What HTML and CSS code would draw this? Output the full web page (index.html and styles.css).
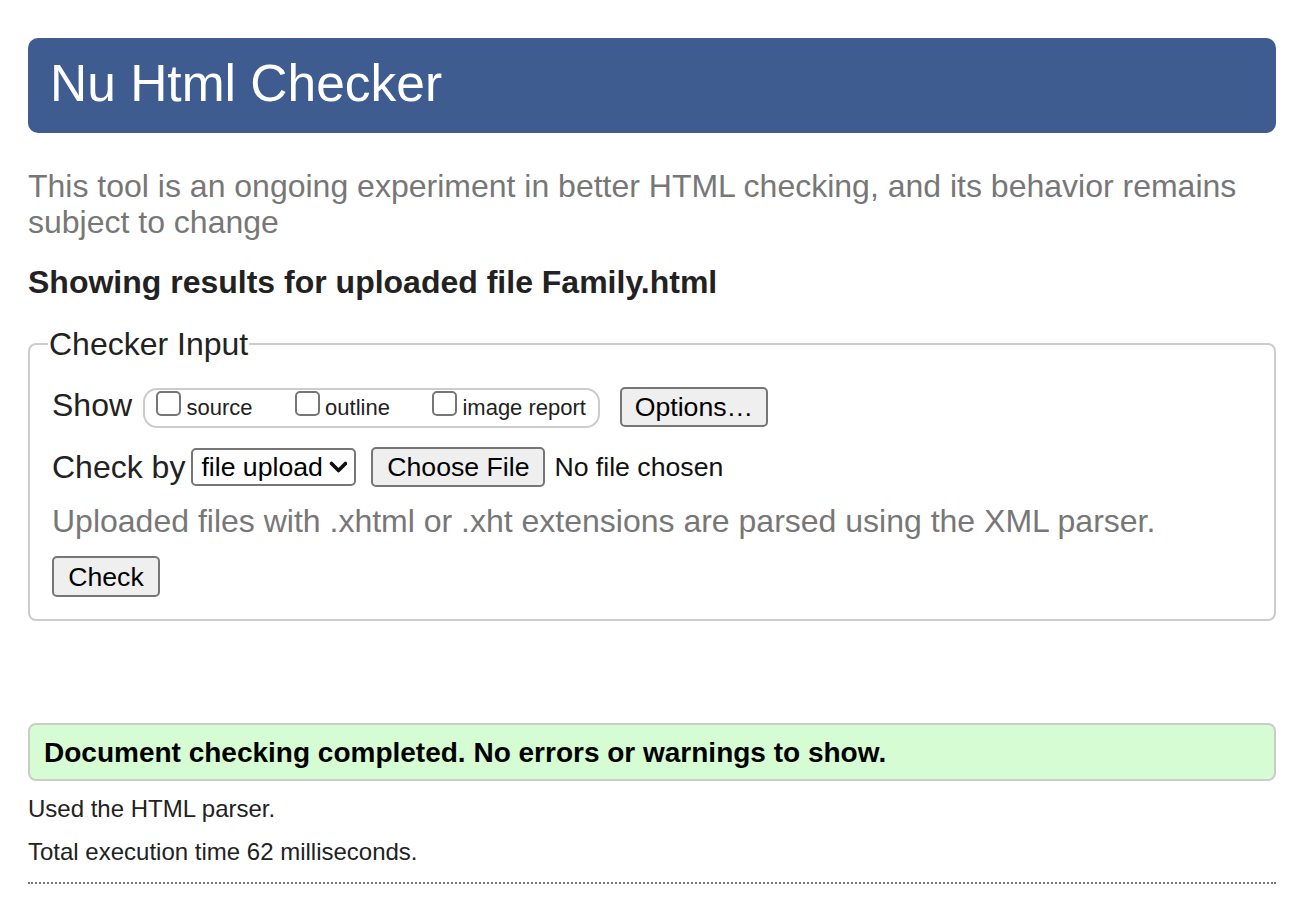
FILE: index.html
```html
<!DOCTYPE html>
<html lang="en">
<head>
<meta charset="utf-8">
<title>Nu Html Checker</title>
<link rel="stylesheet" href="styles.css">
</head>
<body>
<h1 class="banner">Nu Html Checker</h1>
<p class="intro">This tool is an ongoing experiment in better HTML checking, and its behavior remains subject to change</p>
<h2 class="results-title">Showing results for uploaded file Family.html</h2>

<fieldset class="input-box">
  <legend class="input-legend">Checker Input</legend>
  <div class="row row-show">
    <span class="row-label">Show</span>
    <span class="check-group">
      <label class="check-item"><input type="checkbox" class="check"><span class="check-text">source</span></label>
      <label class="check-item"><input type="checkbox" class="check"><span class="check-text">outline</span></label>
      <label class="check-item"><input type="checkbox" class="check"><span class="check-text">image report</span></label>
    </span>
    <button type="button" class="btn btn-options">Options…</button>
  </div>
  <div class="row row-checkby">
    <span class="row-label label-checkby">Check by</span>
    <div class="select">
      <span class="select-text">file upload</span>
      <svg class="chevron" width="20" height="12" viewBox="0 0 20 12"><polyline points="4.5,2.5 11.5,9.5 18.5,2.5" fill="none" stroke="#111" stroke-width="3.6" stroke-linecap="round" stroke-linejoin="round"/></svg>
    </div>
    <button type="button" class="btn btn-file">Choose File</button>
    <span class="file-status">No file chosen</span>
  </div>
  <p class="hint">Uploaded files with .xhtml or .xht extensions are parsed using the XML parser.</p>
  <button type="button" class="btn btn-check">Check</button>
</fieldset>

<div class="success">Document checking completed. No errors or warnings to show.</div>
<p class="meta meta-first">Used the HTML parser.</p>
<p class="meta">Total execution time 62 milliseconds.</p>
<div class="dotted-rule"></div>
</body>
</html>
```
FILE: styles.css
```css
html {
  background: #fff;
}

body {
  margin: 0;
  padding: 38px 22px 20px 28px;
  font-family: "Liberation Sans", Arial, Helvetica, sans-serif;
  font-size: 32px;
  color: #222;
  background: #fff;
}

.banner {
  margin: 0;
  height: 95px;
  box-sizing: border-box;
  padding-left: 22px;
  background: #3e5c8f;
  color: #fff;
  border-radius: 10px;
  font-size: 51.5px;
  font-weight: normal;
  line-height: 91px;
}

.intro {
  margin: 35px 0 0;
  color: #777;
  line-height: 36px;
}

.results-title {
  margin: 24px 0 0;
  font-size: 32px;
  font-weight: bold;
  line-height: 36px;
  color: #222;
}

.input-box {
  margin: 26px 0 0;
  padding: 25px 22px 22px 22px;
  border: 2px solid #ccc;
  border-radius: 8px;
  min-width: 0;
}

.input-legend {
  margin-left: -4px;
  padding: 0 1px;
  line-height: 36px;
  font-size: 32px;
  color: #222;
}

.row {
  display: flex;
  align-items: flex-start;
}

.row-show {
  height: 41px;
}

.row-label {
  line-height: 36px;
  white-space: nowrap;
}

.row-show .row-label {
  margin-right: 11px;
}

.check-group {
  display: flex;
  align-items: flex-start;
  gap: 42px;
  height: 40px;
  box-sizing: border-box;
  margin-top: 1px;
  padding: 0 12px 0 11px;
  border: 2px solid #ccc;
  border-radius: 14px;
}

.check-item {
  display: flex;
  align-items: flex-start;
  gap: 5.5px;
}

.check {
  appearance: none;
  -webkit-appearance: none;
  margin: 1px 0 0;
  width: 25px;
  height: 25px;
  box-sizing: border-box;
  border: 2px solid #767676;
  border-radius: 5px;
  background: #fff;
}

.check-text {
  font-size: 22px;
  line-height: 22px;
  padding-top: 7px;
  color: #222;
  white-space: nowrap;
}

.btn {
  font-family: "Liberation Sans", Arial, Helvetica, sans-serif;
  font-size: 26.67px;
  color: #000;
  background: #efefef;
  border: 2px solid #767676;
  border-radius: 5px;
  box-sizing: border-box;
  padding: 0;
  line-height: 30px;
  text-align: center;
  white-space: nowrap;
}

.btn-options {
  margin-left: 20px;
  width: 148px;
  height: 40px;
}

.row-checkby {
  margin-top: 19px;
  height: 41px;
}

.label-checkby {
  margin-top: 2px;
  margin-right: 6px;
}

.select {
  display: flex;
  align-items: center;
  justify-content: space-between;
  margin-top: 1px;
  width: 165px;
  height: 38px;
  box-sizing: border-box;
  padding: 0 7px 0 8px;
  border: 2px solid #767676;
  border-radius: 5px;
  background: #fff;
  font-size: 26.67px;
  color: #000;
}

.chevron {
  display: block;
}

.btn-file {
  margin-left: 15px;
  width: 174px;
  height: 40px;
}

.file-status {
  margin-left: 9px;
  font-size: 26.67px;
  line-height: 40px;
  color: #111;
  white-space: nowrap;
}

.hint {
  margin: 15px 0 0;
  color: #777;
  line-height: 36px;
}

.btn-check {
  display: block;
  margin-top: 17px;
  width: 108px;
  height: 41px;
}

.success {
  margin-top: 102px;
  height: 58px;
  box-sizing: border-box;
  padding: 3px 0 1px 14px;
  border: 2px solid #ccc;
  border-radius: 8px;
  background: #d6fcd3;
  color: #000;
  font-size: 28px;
  font-weight: bold;
  line-height: 50px;
}

.meta {
  margin: 15px 0 0;
  font-size: 24px;
  line-height: 28px;
  color: #222;
}

.meta-first {
  margin-top: 14px;
}

.dotted-rule {
  margin-top: 16px;
  border-top: 2px dotted #777;
}
```
